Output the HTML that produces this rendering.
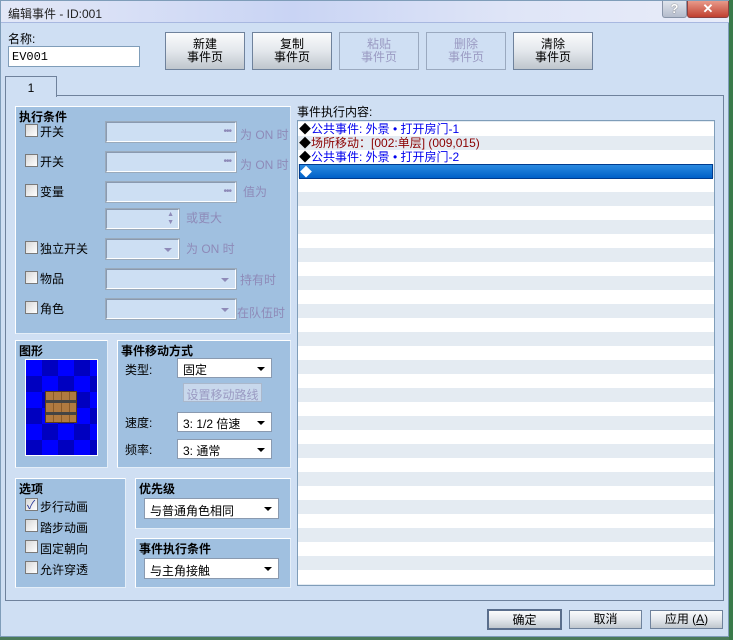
<!DOCTYPE html>
<html><head><meta charset="utf-8"><style>
*{box-sizing:border-box;margin:0;padding:0}
body{width:733px;height:640px;overflow:hidden;background:#3a5a8a;font-family:"Liberation Sans","Noto Sans CJK SC","WenQuanYi Zen Hei",sans-serif;font-size:12px;color:#000;position:relative}
.a{position:absolute}
#win{left:0;top:0;width:729px;height:637px;background:#cfdff3;border:1px solid #7f9db9}
#title{left:0;top:0;width:729px;height:22px;background:linear-gradient(90deg,#e3e8f7,#c9d4f4 40%,#dfe5f7 70%,#e8ecf9);border-bottom:1px solid #a8b8e0}
.btn{position:absolute;border:1px solid #6f829c;background:linear-gradient(#fafbfc,#e3e7ec 50%,#bfc6cd);text-align:center;line-height:13px;font-size:12px;padding-top:5px}
.dis{background:#cfdff3;border-color:#9aa9bf;color:#9a9ac2}
.grp{position:absolute;background:#a0c0e0;border:1px solid #fff;border-right-color:#e4eef8;border-bottom-color:#e4eef8}
.grp b{position:absolute;left:3px;top:1px;font-size:12px}
.cb{position:absolute;width:13px;height:13px;border:1px solid #7a7a7a;background:linear-gradient(135deg,#d8d8d8,#fff)}
.fld{position:absolute;height:20px;background:#cddff3;border:1px solid #8a9ab0;border-right-color:#fff;border-bottom-color:#fff;outline:1px solid #9aaabb}
.gr{position:absolute;color:#8e8ab8}
.sel{position:absolute;height:20px;background:#fff;border:1px solid #8a9ab0;padding:2px 0 0 5px}
.arr{position:absolute;right:6px;top:8px;border-left:4px solid transparent;border-right:4px solid transparent;border-top:4px solid #000}
.darr{position:absolute;right:6px;top:8px;border-left:4px solid transparent;border-right:4px solid transparent;border-top:4px solid #8e8ab8}
.dots{position:absolute;right:4px;top:3px;color:#8e8ab8;font-size:10px;letter-spacing:-1px}
.row{position:absolute;left:1px;width:414px;height:14px;line-height:14px;font-size:12px;white-space:nowrap}
</style></head><body>
<div id="win" class="a">
<div id="title" class="a"><span class="a" style="left:7px;top:4px;font-size:12px;color:#222">编辑事件 - ID:001</span>
<div class="a" style="left:661px;top:0;width:25px;height:17px;border:1px solid #8894a8;border-top:none;border-radius:0 0 3px 3px;background:linear-gradient(#dfe4ec,#b4bccc);text-align:center;font-weight:bold;color:#fff;font-size:13px;text-shadow:0 0 1px #333">?</div>
<div class="a" style="left:686px;top:0;width:42px;height:17px;border:1px solid #8a4040;border-top:none;border-radius:0 0 3px 3px;background:linear-gradient(#e89a8a,#c04030);text-align:center;font-weight:bold;color:#fff;font-size:13px">✕</div>
</div>
</div>
<span class="a" style="left:8px;top:30px">名称:</span>
<div class="a" style="left:8px;top:46px;width:132px;height:21px;background:#fff;border:1px solid #7f9db9;padding:3px 0 0 3px;font-family:'Liberation Mono',monospace;font-size:12px">EV001</div>
<div class="btn" style="left:165px;top:32px;width:80px;height:38px">新建<br>事件页</div>
<div class="btn" style="left:252px;top:32px;width:80px;height:38px">复制<br>事件页</div>
<div class="btn dis" style="left:339px;top:32px;width:80px;height:38px">粘贴<br>事件页</div>
<div class="btn dis" style="left:426px;top:32px;width:80px;height:38px">删除<br>事件页</div>
<div class="btn" style="left:513px;top:32px;width:80px;height:38px">清除<br>事件页</div>
<div class="a" style="left:5px;top:95px;width:719px;height:506px;border:1px solid #6f829c"></div>
<div class="a" style="left:5px;top:76px;width:52px;height:21px;border:1px solid #6f829c;border-bottom:none;background:#cfdff3;text-align:center;padding-top:4px">1</div>

<div class="grp" style="left:15px;top:106px;width:276px;height:228px"><b>执行条件</b></div>
<div class="cb" style="left:25px;top:124px"></div><span class="a" style="left:40px;top:123px">开关</span>
<div class="fld" style="left:106px;top:122px;width:130px"><span class="dots">•••</span></div><span class="gr" style="left:240px;top:126px">为 ON 时</span>
<div class="cb" style="left:25px;top:154px"></div><span class="a" style="left:40px;top:153px">开关</span>
<div class="fld" style="left:106px;top:152px;width:130px"><span class="dots">•••</span></div><span class="gr" style="left:240px;top:156px">为 ON 时</span>
<div class="cb" style="left:25px;top:184px"></div><span class="a" style="left:40px;top:183px">变量</span>
<div class="fld" style="left:106px;top:182px;width:130px"><span class="dots">•••</span></div><span class="gr" style="left:243px;top:183px">值为</span>
<div class="fld" style="left:106px;top:209px;width:73px"><span class="a" style="right:4px;top:1px;color:#8e8ab8;font-size:7px;line-height:8px">▲<br>▼</span></div><span class="gr" style="left:186px;top:209px">或更大</span>
<div class="cb" style="left:25px;top:241px"></div><span class="a" style="left:40px;top:240px">独立开关</span>
<div class="fld" style="left:106px;top:239px;width:73px"><span class="darr"></span></div><span class="gr" style="left:186px;top:240px">为 ON 时</span>
<div class="cb" style="left:25px;top:271px"></div><span class="a" style="left:40px;top:270px">物品</span>
<div class="fld" style="left:106px;top:269px;width:130px"><span class="darr"></span></div><span class="gr" style="left:240px;top:271px">持有时</span>
<div class="cb" style="left:25px;top:301px"></div><span class="a" style="left:40px;top:300px">角色</span>
<div class="fld" style="left:106px;top:299px;width:130px"><span class="darr"></span></div><span class="gr" style="left:237px;top:304px">在队伍时</span>

<div class="grp" style="left:15px;top:340px;width:93px;height:128px"><b>图形</b></div>
<div class="a" style="left:25px;top:359px;width:73px;height:97px;border:1px solid #fff;background-color:#0000ff;background-image:conic-gradient(#0000c0 0 25%,#0000ff 0 50%,#0000c0 0 75%,#0000ff 0);background-size:32px 32px;background-position:0 0"></div>
<div class="a" style="left:45px;top:391px;width:32px;height:32px;background:repeating-linear-gradient(90deg,#b07a40 0 7px,#8a5a28 7px 8px);border:1px solid #5a3a18"><div class="a" style="left:0;top:8px;width:30px;height:3px;background:#444"></div><div class="a" style="left:0;top:20px;width:30px;height:3px;background:#444"></div></div>

<div class="grp" style="left:117px;top:340px;width:174px;height:128px"><b>事件移动方式</b></div>
<span class="a" style="left:125px;top:361px">类型:</span>
<div class="sel" style="left:177px;top:358px;width:95px">固定<span class="arr"></span></div>
<div class="a" style="left:183px;top:383px;width:79px;height:19px;border:1px solid #aab8cc;background:#c8d8ec;color:#9a9ac2;text-align:center;padding-top:2px">设置移动路线</div>
<span class="a" style="left:125px;top:414px">速度:</span>
<div class="sel" style="left:177px;top:412px;width:95px">3: 1/2 倍速<span class="arr"></span></div>
<span class="a" style="left:125px;top:441px">频率:</span>
<div class="sel" style="left:177px;top:439px;width:95px">3: 通常<span class="arr"></span></div>

<div class="grp" style="left:15px;top:478px;width:111px;height:110px"><b>选项</b></div>
<div class="cb" style="left:25px;top:498px"><span class="a" style="left:1px;top:-3px;color:#2a3a9a;font-size:12px">✓</span></div><span class="a" style="left:40px;top:498px">步行动画</span>
<div class="cb" style="left:25px;top:519px"></div><span class="a" style="left:40px;top:519px">踏步动画</span>
<div class="cb" style="left:25px;top:540px"></div><span class="a" style="left:40px;top:540px">固定朝向</span>
<div class="cb" style="left:25px;top:561px"></div><span class="a" style="left:40px;top:561px">允许穿透</span>

<div class="grp" style="left:135px;top:478px;width:156px;height:51px"><b>优先级</b></div>
<div class="sel" style="left:144px;top:498px;width:135px;height:21px;padding-top:3px">与普通角色相同<span class="arr"></span></div>
<div class="grp" style="left:135px;top:538px;width:156px;height:50px"><b>事件执行条件</b></div>
<div class="sel" style="left:144px;top:558px;width:135px;height:21px;padding-top:3px">与主角接触<span class="arr"></span></div>

<span class="a" style="left:297px;top:103px">事件执行内容:</span>
<div class="a" style="left:297px;top:120px;width:418px;height:466px;border:1px solid #7f9db9;background:repeating-linear-gradient(#fff 0 14px,#e4ebf2 14px 28px);background-position:0 1px;overflow:hidden">
<div class="row" style="top:1px;color:#0000ee"><span style="color:#000">◆</span>公共事件: 外景 • 打开房门-1</div>
<div class="row" style="top:15px;color:#8b0000"><span style="color:#000">◆</span>场所移动：[002:单层] (009,015)</div>
<div class="row" style="top:29px;color:#0000ee"><span style="color:#000">◆</span>公共事件: 外景 • 打开房门-2</div>
<div class="row" style="top:43px;background:linear-gradient(#2a8ae0,#0060c8);color:#fff;border:1px solid #003c90;height:15px">◆</div>
</div>

<div class="btn" style="left:487px;top:609px;width:75px;height:21px;padding-top:3px;border:2px solid #5a6e8c">确定</div>
<div class="btn" style="left:569px;top:610px;width:73px;height:19px;padding-top:2px">取消</div>
<div class="btn" style="left:650px;top:610px;width:73px;height:19px;padding-top:2px">应用 (<u>A</u>)</div>
<div class="a" style="left:0;top:637px;width:733px;height:3px;background:#4a7a5a"></div>
<div class="a" style="left:729px;top:0;width:4px;height:640px;background:#3a7a4a"></div>
</body></html>
